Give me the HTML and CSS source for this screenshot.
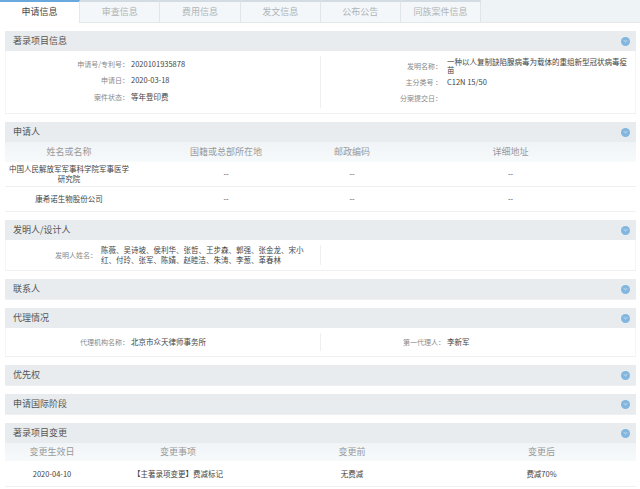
FILE: index.html
```html
<!DOCTYPE html>
<html lang="zh-CN">
<head>
  <meta charset="UTF-8">
  <title>申请信息</title>
  <link rel="stylesheet" href="styles.css">
</head>
<body>
  <!-- 标签 -->
  <div class="tabs">
    <div class="tab active">申请信息</div>
    <div class="tab">审查信息</div>
    <div class="tab">费用信息</div>
    <div class="tab">发文信息</div>
    <div class="tab">公布公告</div>
    <div class="tab">同族案件信息</div>
  </div>

  <div class="content">
    <!-- 著录项目信息 -->
    <section class="panel">
      <div class="panel-head"><span>著录项目信息</span><i class="toggle"></i></div>
      <div class="info info-main">
        <div class="info-col">
          <div class="field"><label>申请号/专利号：</label><span>2020101935878</span></div>
          <div class="field"><label>申请日：</label><span>2020-03-18</span></div>
          <div class="field"><label>案件状态：</label><span>等年登印费</span></div>
        </div>
        <div class="info-col right">
          <div class="field tight"><label>发明名称：</label><span>一种以人复制缺陷腺病毒为载体的重组新型冠状病毒疫苗</span></div>
          <div class="field"><label>主分类号 ：</label><span>C12N 15/50</span></div>
          <div class="field"><label>分案提交日：</label><span></span></div>
        </div>
      </div>
    </section>

    <!-- 申请人 -->
    <section class="panel">
      <div class="panel-head"><span>申请人</span><i class="toggle"></i></div>
      <table class="grid applicants">
        <colgroup><col class="c1"><col class="c2"><col class="c3"><col class="c4"></colgroup>
        <thead>
          <tr><th>姓名或名称</th><th>国籍或总部所在地</th><th>邮政编码</th><th>详细地址</th></tr>
        </thead>
        <tbody>
          <tr><td>中国人民解放军军事科学院军事医学研究院</td><td>--</td><td>--</td><td>--</td></tr>
          <tr><td>康希诺生物股份公司</td><td>--</td><td>--</td><td>--</td></tr>
        </tbody>
      </table>
    </section>

    <!-- 发明人/设计人 -->
    <section class="panel">
      <div class="panel-head"><span>发明人/设计人</span><i class="toggle"></i></div>
      <div class="info info-inventor">
        <div class="info-col inventor">
          <div class="field"><label>发明人姓名：</label><span>陈薇、吴诗坡、侯利华、张哲、王步森、郭强、张金龙、宋小红、付玲、张军、陈婧、赵睦洁、朱涛、李葱、革春林</span></div>
        </div>
        <div class="info-col right"></div>
      </div>
    </section>

    <section class="panel">
      <div class="panel-head"><span>联系人</span><i class="toggle"></i></div>
    </section>

    <!-- 代理情况 -->
    <section class="panel">
      <div class="panel-head"><span>代理情况</span><i class="toggle"></i></div>
      <div class="info info-agent">
        <div class="info-col">
          <div class="field"><label>代理机构名称：</label><span>北京市众天律师事务所</span></div>
        </div>
        <div class="info-col right">
          <div class="field"><label>第一代理人：</label><span>李新军</span></div>
        </div>
      </div>
    </section>

    <section class="panel">
      <div class="panel-head"><span>优先权</span><i class="toggle"></i></div>
    </section>

    <section class="panel">
      <div class="panel-head"><span>申请国际阶段</span><i class="toggle"></i></div>
    </section>

    <!-- 著录项目变更 -->
    <section class="panel">
      <div class="panel-head"><span>著录项目变更</span><i class="toggle"></i></div>
      <table class="grid changes">
        <colgroup><col class="c1"><col class="c2"><col class="c3"><col class="c4"></colgroup>
        <thead>
          <tr><th>变更生效日</th><th>变更事项</th><th>变更前</th><th>变更后</th></tr>
        </thead>
        <tbody>
          <tr><td>2020-04-10</td><td>【主著录项变更】费减标记</td><td>无费减</td><td>费减70%</td></tr>
        </tbody>
      </table>
    </section>
  </div>
</body>
</html>
```

FILE: styles.css
```css
/* 基本样式 */
body {
  margin: 0;
  background: #fff;
  color: #444;
  font-family: "Noto Sans CJK SC", "Liberation Sans", sans-serif;
  font-size: 7.5px;
  line-height: 8px;
  overflow: hidden;
}

/* 标签 */
.tabs {
  display: flex;
  height: 22px;
  background: #eef3f5;
  border-bottom: 1px solid #e3e8eb;
}

.tab {
  width: 79.2px;
  height: 20px;
  line-height: 20px;
  border-top: 2px solid #d3dce2;
  border-right: 1px solid #dfe5e8;
  background: #f3f7f9;
  color: #b0b4b6;
  font-size: 9px;
  text-align: center;
}

.tab.active {
  height: 21px;
  border-top-color: #6aa9dd;
  border-right-color: #e3e8eb;
  background: #fff;
  color: #444;
}

/* 区块 */
.content {
  padding: 8px 4px 0 5px;
}

.panel {
  margin-bottom: 8px;
  border-bottom: 1px solid #eef0f1;
}

.panel-head {
  display: flex;
  justify-content: space-between;
  align-items: center;
  height: 20px;
  padding: 0 6px 0 8px;
  background: #e8ecee;
  color: #555;
  font-size: 9px;
}

.toggle {
  display: flex;
  justify-content: center;
  width: 9px;
  height: 9px;
  border-radius: 50%;
  background: #82b6de;
}

.toggle::after {
  content: "";
  width: 2px;
  height: 2px;
  margin-top: 2px;
  border-right: 1px solid #b4d3ea;
  border-bottom: 1px solid #b4d3ea;
  transform: rotate(45deg);
}

/* 信息 */
.info {
  display: flex;
  border-left: 1px solid #f4f5f6;
  border-right: 1px solid #f4f5f6;
}

.info-main { height: 62px; }
.info-inventor { height: 30px; }
.info-agent { height: 28px; }

.info-col {
  flex: 0 0 314px;
  display: flex;
  flex-direction: column;
  gap: 8.5px;
}

.info-main .info-col { padding-top: 8.5px; }
.info-agent .info-col { padding-top: 10px; }

.info-col.right {
  flex: 1;
  border-left: 1px solid #eeeff0;
  margin: 5px 0;
  gap: 8px;
}

.info-main .info-col.right { padding-top: 2px; }
.info-agent .info-col.right { padding-top: 5px; }

.field {
  display: flex;
  min-height: 8px;
}

.field label {
  flex: 0 0 123px;
  text-align: right;
  color: #888;
  font-size: 7px;
}

.field span {
  flex: 1;
  padding-left: 2px;
}

.right .field label {
  flex-basis: 121px;
}

.right .field span {
  padding-left: 5px;
  padding-right: 6px;
}

.right .field.tight {
  margin-bottom: -4px;
  align-items: center;
}

.info-agent .right .field label {
  flex-basis: 124px;
}

.info-agent .right .field span {
  padding-left: 2px;
}

.inventor {
  justify-content: center;
}

.inventor .field {
  align-items: center;
}

.inventor .field label {
  flex-basis: 91px;
}

.inventor .field span {
  padding-left: 4px;
  padding-right: 12px;
  line-height: 10px;
}

/* 表格 */
.grid {
  width: 100%;
  border-collapse: collapse;
  table-layout: fixed;
}

.grid th {
  height: 20px;
  padding: 0;
  background: linear-gradient(#f0f4f7, #f7fafb);
  color: #999;
  font-size: 9px;
  font-weight: normal;
}

.grid td {
  height: 24px;
  padding: 0 3px;
  line-height: 10px;
  text-align: center;
  border-bottom: 1px solid #eeeff0;
}

.grid tr:last-child td {
  border-bottom: none;
}

.applicants .c1 { width: 128px; }
.applicants .c2 { width: 186px; }
.applicants .c3 { width: 66px; }

.changes th { height: 18px; }
.changes td { height: 25px; }
.changes .c1 { width: 94px; }
.changes .c2 { width: 158px; }
.changes .c3 { width: 190px; }
```
